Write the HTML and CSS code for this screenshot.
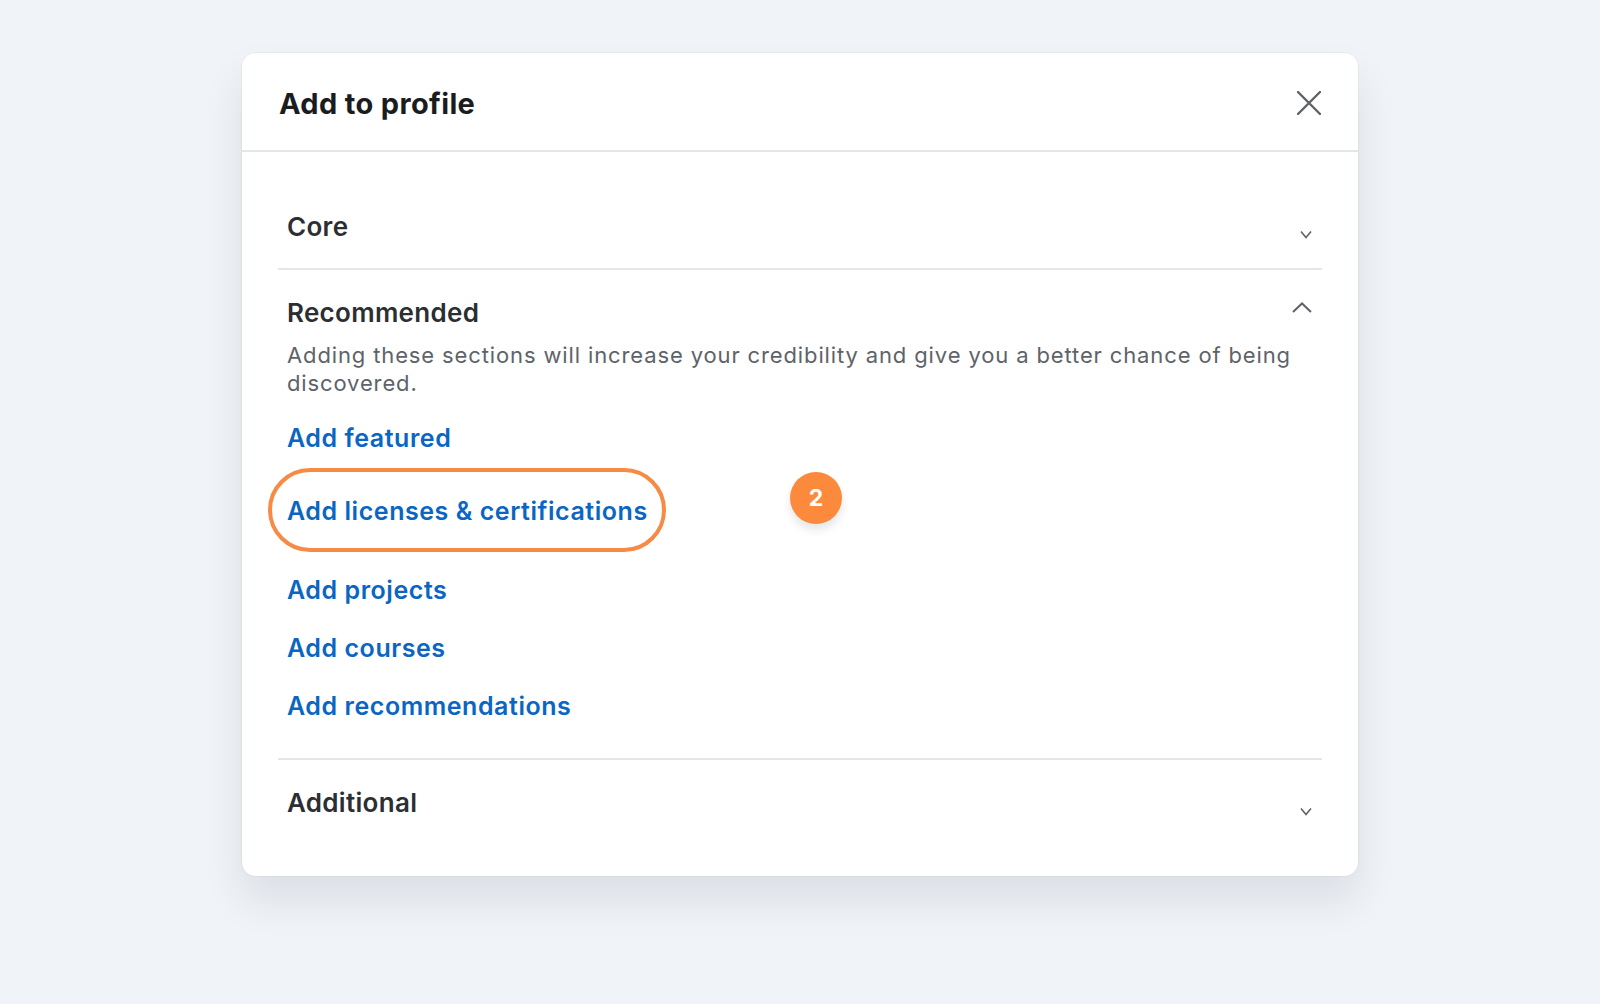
FILE: index.html
```html
<!DOCTYPE html>
<html lang="en">
<head>
<meta charset="utf-8">
<title>Add to profile</title>
<link rel="stylesheet" href="styles.css">
</head>
<body>
<div class="page">
  <div class="modal">
    <div class="modal-header">
      <h2 class="modal-title">Add to profile</h2>
      <button class="close-btn" aria-label="Close">
        <svg width="24" height="24" viewBox="0 0 24 24"><path d="M1 1 L23 23 M23 1 L1 23" stroke="#5f6368" stroke-width="2.4" fill="none" stroke-linecap="round"/></svg>
      </button>
    </div>
    <div class="modal-body">
      <section class="section section-core">
        <div class="section-head">
          <h3 class="section-title">Core</h3>
          <svg class="chev-down" width="12" height="9" viewBox="0 0 12 9"><path d="M1 1.5 L6 7.5 L11 1.5" stroke="#5f6368" stroke-width="1.6" fill="none"/></svg>
        </div>
      </section>
      <section class="section section-rec">
        <div class="section-head">
          <h3 class="section-title">Recommended</h3>
          <svg class="chev-up" width="20" height="11" viewBox="0 0 20 11"><path d="M1 10 L10 1.5 L19 10" stroke="#5f6368" stroke-width="2" fill="none"/></svg>
        </div>
        <p class="section-desc">Adding these sections will increase your credibility and give you a better chance of being discovered.</p>
        <ul class="link-list">
          <li><a class="link" href="#">Add featured</a></li>
          <li class="highlighted"><a class="link" href="#">Add licenses &amp; certifications</a></li>
          <li><a class="link" href="#">Add projects</a></li>
          <li><a class="link" href="#">Add courses</a></li>
          <li><a class="link" href="#">Add recommendations</a></li>
        </ul>
        <div class="step-badge">2</div>
      </section>
      <section class="section section-add">
        <div class="section-head">
          <h3 class="section-title">Additional</h3>
          <svg class="chev-down" width="12" height="9" viewBox="0 0 12 9"><path d="M1 1.5 L6 7.5 L11 1.5" stroke="#5f6368" stroke-width="1.6" fill="none"/></svg>
        </div>
      </section>
    </div>
  </div>
</div>
</body>
</html>
```

FILE: styles.css
```css
* { box-sizing: border-box; }
html, body { margin: 0; padding: 0; }
body {
  background: #f0f3f7;
  font-family: Inter, "Noto Sans", "Liberation Sans", sans-serif;
  width: 1600px;
  height: 1004px;
  overflow: hidden;
}
.page {
  padding: 53px 0 0 242px;
}
.modal {
  width: 1116px;
  height: 823px;
  background: #ffffff;
  border-radius: 14px;
  box-shadow: 0 0 0 1px rgba(0,0,0,0.03), 0 24px 40px rgba(40,50,70,0.10);
  position: relative;
}
.modal-header {
  height: 99px;
  border-bottom: 2px solid #e4e6e8;
  display: flex;
  align-items: center;
  justify-content: space-between;
  padding: 4px 37px 0 37px;
}
.modal-title {
  margin: 0;
  font-size: 29px;
  line-height: 36px;
  font-weight: 700;
  color: #1b1c1e;
  letter-spacing: 0.35px;
}
.close-btn {
  border: 0;
  background: none;
  padding: 0;
  width: 24px;
  height: 24px;
  display: flex;
  margin-top: -2px;
}
.modal-body {
  padding: 0 36px;
}
.section {
  border-bottom: 2px solid #e4e6e8;
  position: relative;
}
.section:last-child { border-bottom: 0; }
.section-head {
  display: flex;
  justify-content: space-between;
  align-items: flex-end;
  padding: 0 10px 0 9px;
}
.section-title {
  margin: 0;
  font-size: 26px;
  line-height: 32px;
  font-weight: 600;
  color: #2b2e32;
  letter-spacing: 0.3px;
}
.section-core { padding: 59px 0 25px; }
.section-core .chev-down { margin-bottom: 4px; }
.section-add .chev-down { margin-bottom: 3px; }
.section-rec { padding: 27px 0 36px; }
.section-rec .section-head { align-items: flex-start; padding-right: 10px; }
.chev-up { margin-top: 5px; }
.section-add { padding: 27px 0 0; }
.section-desc {
  margin: 12px 9px 0;
  font-size: 22px;
  line-height: 28px;
  color: #5e6369;
  letter-spacing: 0.87px;
}
.link-list {
  list-style: none;
  margin: 25px 0 0;
  padding: 0 9px;
  display: flex;
  flex-direction: column;
  gap: 26px;
}
.link-list li {
  font-size: 25px;
  line-height: 32px;
}
.link {
  font-size: 25px;
  font-weight: 600;
  color: #0a66c2;
  text-decoration: none;
  letter-spacing: 0.55px;
}
.link-list li.highlighted {
  position: relative;
  margin: 15px 0 21px;
  align-self: flex-start;
}
.link-list li.highlighted::before {
  content: "";
  position: absolute;
  left: -19px;
  top: -27px;
  right: -18px;
  bottom: -25px;
  border: 4px solid #f58b45;
  border-radius: 44px;
}
.step-badge {
  position: absolute;
  left: 512px;
  top: 202px;
  width: 52px;
  height: 52px;
  border-radius: 50%;
  background: #fb8a3d;
  color: #ffffff;
  font-size: 23px;
  font-weight: 700;
  display: flex;
  align-items: center;
  justify-content: center;
  box-shadow: 0 6px 10px rgba(0,0,0,0.10);
}
```
